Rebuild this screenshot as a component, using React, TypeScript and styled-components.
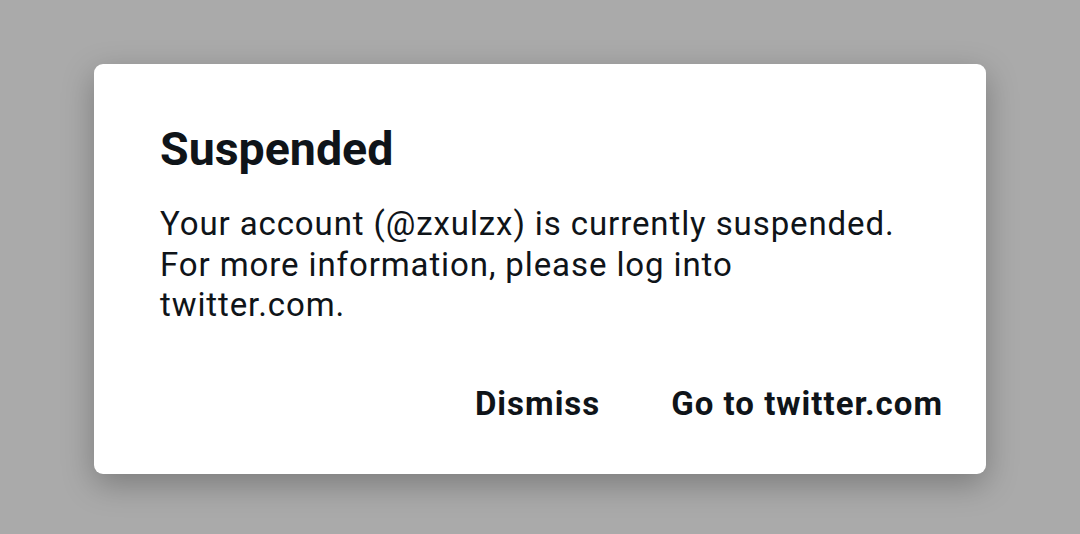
import React from 'react'
import styled, { createGlobalStyle } from 'styled-components'

const GlobalStyle = createGlobalStyle`
    html, body {
        margin: 0;
        padding: 0;
        height: 100%;
    }
    body {
        background-color: #aaaaaa;
        font-family: Roboto, "Noto Sans", sans-serif;
        color: #0f1419;
    }
    #root {
        height: 100%;
    }
`

const Backdrop = styled.div`
    height: 100%;
    display: flex;
    justify-content: center;
    padding-top: 64px;
    box-sizing: border-box;
`

const Dialog = styled.div`
    width: 892px;
    height: 410px;
    box-sizing: border-box;
    background-color: #ffffff;
    border-radius: 9px;
    box-shadow: 0 10px 32px rgba(0, 0, 0, 0.28);
    padding: 57px 43px 0 66px;
    display: flex;
    flex-direction: column;
`

const Title = styled.h2`
    margin: 0;
    font-size: 46.5px;
    font-weight: 700;
    line-height: 56px;
`

const Message = styled.p`
    margin: 27px 0 0;
    width: 760px;
    font-size: 33px;
    font-weight: 400;
    line-height: 40.5px;
    letter-spacing: 0.9px;
`

const Actions = styled.div`
    display: flex;
    justify-content: flex-end;
    gap: 71px;
    margin-top: 58px;
`

const ActionButton = styled.button`
    border: none;
    background: none;
    padding: 0;
    font-family: inherit;
    font-size: 33px;
    font-weight: 700;
    letter-spacing: 1px;
    color: #0f1419;
    line-height: 40px;
    cursor: pointer;
`

function App() {
    return (
        <>
            <GlobalStyle />
            <Backdrop>
                <Dialog>
                    <Title>Suspended</Title>
                    <Message>
                        Your account (@zxulzx) is currently suspended.
                        For more information, please log into twitter.com.
                    </Message>
                    <Actions>
                        <ActionButton>Dismiss</ActionButton>
                        <ActionButton>Go to twitter.com</ActionButton>
                    </Actions>
                </Dialog>
            </Backdrop>
        </>
    )
}

export default App
